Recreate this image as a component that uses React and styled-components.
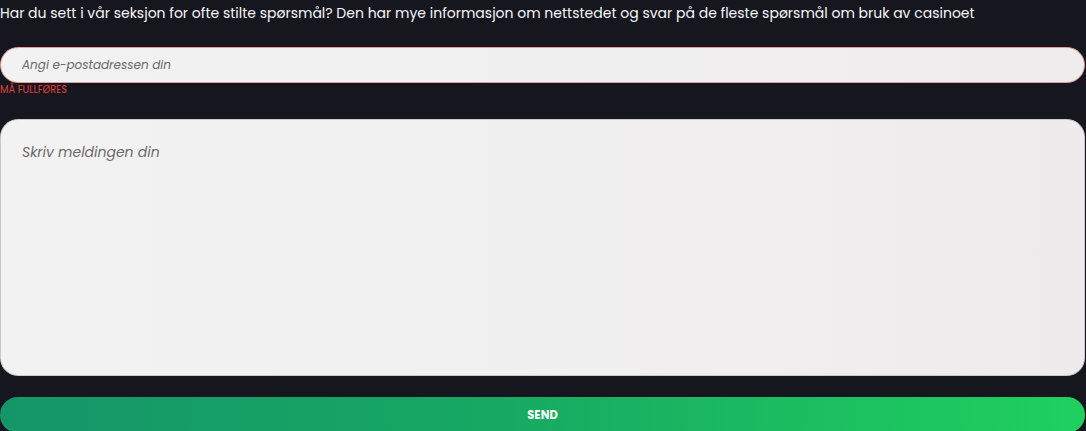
import React from "react";
import styled, { createGlobalStyle } from "styled-components";

const Global = createGlobalStyle`
  html, body { margin: 0; padding: 0; background: #15161e; }
  body { font-family: "Poppins", "Inter", "Liberation Sans", sans-serif; }
  * { box-sizing: border-box; }
`;

const Page = styled.div`
  width: 1086px;
  height: 431px;
  overflow: hidden;
  background: #15161e;
  padding-top: 3px;
`;

const Intro = styled.p`
  margin: 0;
  color: #f6f6f8;
  font-size: 14px;
  line-height: 20px;
`;

const Form = styled.form`
  display: flex;
  flex-direction: column;
  width: 1085px;
  margin-top: 24px;
`;

const Field = styled.div`
  display: flex;
  flex-direction: column;
`;

const EmailInput = styled.input`
  height: 36px;
  border-radius: 18px;
  border: 1px solid #e79a9c;
  background: linear-gradient(90deg, #f2f2f2 0%, #f1f0f0 50%, #eeeced 100%);
  padding: 0 21px;
  font-family: inherit;
  font-size: 12px;
  outline: none;
  &::placeholder { color: #6a6a6a; font-style: italic; }
`;

const Error = styled.span`
  color: #e0403f;
  font-size: 9.8px;
  line-height: 12px;
  margin-top: 1px;
  text-transform: uppercase;
`;

const Message = styled.textarea`
  margin-top: 23px;
  height: 257px;
  border-radius: 18px;
  border: 1px solid #c9c9cc;
  background: linear-gradient(90deg, #f2f2f2 0%, #f1f0f0 50%, #eeebec 100%);
  padding: 22px 21px;
  font-family: inherit;
  font-size: 14px;
  resize: none;
  outline: none;
  &::placeholder { color: #6a6a6a; font-style: italic; }
`;

const SendButton = styled.button`
  margin-top: 21px;
  height: 36px;
  border: none;
  border-radius: 18px;
  background: linear-gradient(90deg, #159669 0%, #17a863 45%, #1fd05f 100%);
  color: #ffffff;
  font-family: inherit;
  font-weight: 700;
  font-size: 11.5px;
  letter-spacing: 0.1px;
  cursor: pointer;
`;

export default function App() {
  return (
    <Page>
      <Global />
      <Intro>
        Har du sett i vår seksjon for ofte stilte spørsmål? Den har mye informasjon om nettstedet og svar på de fleste spørsmål om bruk av casinoet
      </Intro>
      <Form onSubmit={(e) => e.preventDefault()}>
        <Field>
          <EmailInput type="email" placeholder="Angi e-postadressen din" />
          <Error>Må fullføres</Error>
        </Field>
        <Message placeholder="Skriv meldingen din" />
        <SendButton type="submit">SEND</SendButton>
      </Form>
    </Page>
  );
}
